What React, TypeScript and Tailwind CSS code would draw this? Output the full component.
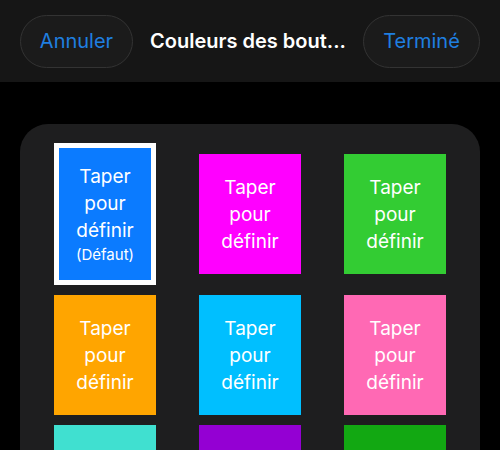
import React from 'react'

const TILES = [
  { color: '#0b7bff', selected: true },
  { color: '#ff00ff' },
  { color: '#33cc33' },
  { color: '#ffa500' },
  { color: '#00bfff' },
  { color: '#ff69b4' },
  { color: '#40e0d0' },
  { color: '#9400d3' },
  { color: '#12a812' },
]

function Tile({ color, selected }: { color: string; selected?: boolean }) {
  if (selected) {
    return (
      <div className="h-[142px] w-[102px] border-[5px] border-white flex flex-col items-center justify-center text-white text-center" style={{ backgroundColor: color }}>
        <span className="text-[19px] leading-[27px]">Taper</span>
        <span className="text-[19px] leading-[27px]">pour</span>
        <span className="text-[19px] leading-[27px]">définir</span>
        <span className="text-[15px] leading-[22px]">(Défaut)</span>
      </div>
    )
  }
  return (
    <div className="h-[120px] w-[102px] flex flex-col items-center justify-center text-white text-center" style={{ backgroundColor: color }}>
      <span className="text-[19px] leading-[27px]">Taper</span>
      <span className="text-[19px] leading-[27px]">pour</span>
      <span className="text-[19px] leading-[27px]">définir</span>
    </div>
  )
}

export default function App() {
  return (
    <div className="w-[500px] h-[450px] overflow-hidden bg-black font-['Inter','Liberation_Sans',sans-serif]">
      {/* nav bar */}
      <div className="h-[82px] bg-[#161616] flex items-center justify-between px-5">
        <button className="h-[53px] w-[113px] rounded-full border border-[#333333] bg-[#1b1b1b] text-[20px] text-[#1f7fe0]">
          Annuler
        </button>
        <div className="text-[20px] font-semibold text-white">Couleurs des bout...</div>
        <button className="h-[53px] w-[117px] rounded-full border border-[#333333] bg-[#1b1b1b] text-[20px] text-[#1f7fe0]">
          Terminé
        </button>
      </div>

      {/* color panel */}
      <div className="mt-[42px] mx-5 rounded-[28px] bg-[#1e1e1f] pt-[19px] pl-[34px] pb-8">
        <div className="grid grid-cols-[102px_102px_102px] gap-x-[43px] gap-y-[10px] items-center">
          {TILES.map((t, i) => (
            <Tile key={i} color={t.color} selected={t.selected} />
          ))}
        </div>
      </div>
    </div>
  )
}
